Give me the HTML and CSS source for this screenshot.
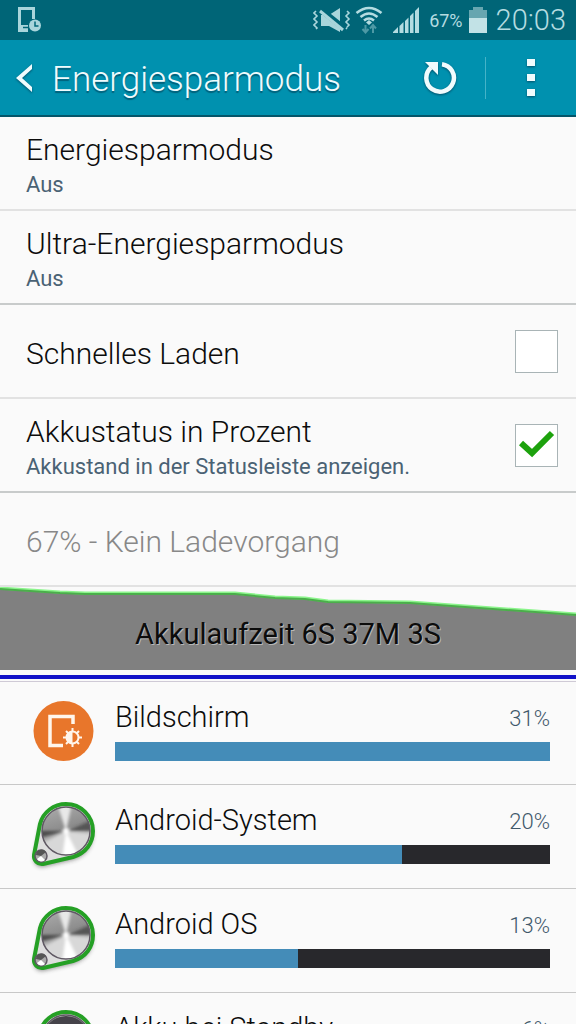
FILE: index.html
```html
<!DOCTYPE html>
<html lang="de">
<head>
<meta charset="utf-8">
<meta name="viewport" content="width=device-width, initial-scale=1">
<title>Energiesparmodus</title>
<link rel="stylesheet" href="styles.css">
</head>
<body>
<svg class="defs" width="0" height="0" aria-hidden="true">
  <defs>
    <linearGradient id="metal" x1="0.3" y1="0" x2="0.6" y2="1">
      <stop offset="0" stop-color="#a8a8a8"/>
      <stop offset="0.45" stop-color="#8c8c8c"/>
      <stop offset="0.6" stop-color="#b8b8b8"/>
      <stop offset="1" stop-color="#dadada"/>
    </linearGradient>
    <filter id="soft" x="-30%" y="-30%" width="160%" height="160%"><feGaussianBlur stdDeviation="2"/></filter>
    <filter id="blend" x="-30%" y="-30%" width="160%" height="160%"><feGaussianBlur stdDeviation="1.8"/></filter>
    <clipPath id="disc"><circle cx="36" cy="36" r="24"/></clipPath>
    <symbol id="knob" viewBox="-2 2 72 76">
      <path d="M10 29C13 17 24 9 36 9A27 27 0 0 1 63 36C63 48 56 58 43 62L13 69A8 8 0 0 1 4 60Z" transform="translate(0 3)" fill="#333" opacity="0.5" filter="url(#soft)"/>
      <path d="M10 29C13 17 24 9 36 9A27 27 0 0 1 63 36C63 48 56 58 43 62L13 69A8 8 0 0 1 4 60Z" fill="#dedede" stroke="#25a025" stroke-width="4" stroke-linejoin="round"/>
      <circle cx="36" cy="36" r="24" fill="url(#metal)"/>
      <g clip-path="url(#disc)"><g filter="url(#blend)">
        <path d="M36 36L27 8L42 8Z" fill="#e8e8e8"/>
        <path d="M36 36L64 24L64 36Z" fill="#555"/>
        <path d="M36 36L8 36L8 43Z" fill="#4c4c4c"/>
        <path d="M36 36L64 40L58 64L20 64L10 50Z" fill="#d8d8d8"/>
        <path d="M36 36L32 66L50 64Z" fill="#fff"/>
        <circle cx="36" cy="36" r="3" fill="#fff"/>
      </g></g>
      <circle cx="36" cy="36" r="24" fill="none" stroke="#5f5863" stroke-width="1.5"/>
      <circle cx="11" cy="61" r="6" fill="#aaa" stroke="#5f5863" stroke-width="1.5"/>
      <path d="M6 60L11 61L16 57A5.5 5.5 0 0 0 6 60Z" fill="#555"/>
      <path d="M7 64L11 61L15 65A5 5 0 0 1 7 64Z" fill="#fff"/>
    </symbol>
  </defs>
</svg>
<div class="screen">
  <div class="status">
    <svg class="status-note" viewBox="0 0 24 26" width="24" height="26" aria-hidden="true">
      <path d="M0 0H17V12H14V3H3V18H10V25H0Z" fill="#a9d5db"/>
      <path d="M5 20.5H10" stroke="#006577" stroke-width="1.5"/>
      <circle cx="17" cy="18.5" r="6" fill="#a9d5db"/>
      <path d="M17 14.5V19H20.5" fill="none" stroke="#006577" stroke-width="1.5"/>
    </svg>
    <div class="status-info">
      <svg viewBox="0 0 38 24" width="38" height="24" aria-hidden="true">
        <path d="M3 3L1 5L4 8L1 11L4 14L1 17L4 20L3 21M34 3L36 5L33 8L36 11L33 14L36 17L33 20L34 21" fill="none" stroke="#a9d5db" stroke-width="1.6"/>
        <path d="M8 7H16L27 0V24L16 18H8Z" fill="#a9d5db"/>
        <path d="M7 1L32 21" stroke="#006577" stroke-width="6"/>
        <path d="M7 3L30 22" stroke="#a9d5db" stroke-width="3"/>
      </svg>
      <svg class="wifi" viewBox="0 0 28 28" width="28" height="28" aria-hidden="true">
        <path d="M1.500 7Q14 -3 26.500 7M5.500 11Q14 4 22.500 11M9 14.500Q14 10.500 19 14.500" fill="none" stroke="#b4dce1" stroke-width="2.600"/>
        <path d="M14 14L17 16.500L14 19L11 16.500Z" fill="#b4dce1"/>
        <path d="M10.500 19V25M7.500 23L10.500 26.500L13.500 23M18 27V20M15 22.500L18 19L21 22.500" fill="none" stroke="#4d99a5" stroke-width="2"/>
      </svg>
      <svg class="signal" viewBox="0 0 26 26" width="26" height="26" aria-hidden="true">
        <path d="M0 26V25L5 20V26ZM6.500 26V19L10.500 15V26ZM12 26V14L15.500 10.500V26ZM17 26V9L20.500 5.500V26ZM22 26V4L26 0V26Z" fill="#b4dce1"/>
      </svg>
      <span class="percent">67%</span>
      <svg class="battery" viewBox="0 0 18 26" width="18" height="26" aria-hidden="true">
        <path d="M0 3H4V0H14V3H18V11H0Z" fill="#67a6b0"/><path d="M0 11H18V26H0Z" fill="#c2e2e6"/>
      </svg>
      <time class="clock">20:03</time>
    </div>
  </div>

  <header class="bar">
    <button class="back" aria-label="Zurück">
      <svg viewBox="0 0 18 30" width="18" height="30" aria-hidden="true"><path d="M16 1V6L6 15L16 24V29L0 15Z" fill="#f0fbfd"/></svg>
    </button>
    <h1 class="title">Energiesparmodus</h1>
    <button class="reload" aria-label="Aktualisieren">
      <svg viewBox="0 0 34 34" width="34" height="34" aria-hidden="true"><path d="M19 3.200A13.800 13.800 0 1 1 8 6.500" fill="none" stroke="#f0fbfd" stroke-width="4.500"/><path d="M2 1H15V14Z" fill="#f0fbfd"/></svg>
    </button>
    <button class="more" aria-label="Weitere Optionen">
      <svg viewBox="0 0 8 38" width="8" height="38" aria-hidden="true"><path d="M0 0H8V7H0ZM0 15H8V22H0ZM0 30H8V37H0Z" fill="#f0fbfd"/></svg>
    </button>
  </header>

  <main class="content">
    <a class="row" href="#energie"><span class="text"><span class="name">Energiesparmodus</span><span class="hint">Aus</span></span></a>
    <a class="row strong" href="#ultra"><span class="text"><span class="name">Ultra-Energiesparmodus</span><span class="hint">Aus</span></span></a>
    <div class="row">
      <label class="text" for="fast"><span class="name">Schnelles Laden</span></label>
      <input class="tick" type="checkbox" id="fast">
    </div>
    <div class="row strong">
      <label class="text" for="show"><span class="name">Akkustatus in Prozent</span><span class="hint">Akkustand in der Statusleiste anzeigen.</span></label>
      <input class="tick" type="checkbox" id="show" checked>
    </div>
    <div class="row muted"><span class="text"><span class="name">67% - Kein Ladevorgang</span></span></div>

    <section class="graph">
      <svg class="curve" viewBox="0 0 576 94" preserveAspectRatio="none" aria-hidden="true">
        <path d="M0 1L60 5L85 6H235L275 10L305 11L328 14L410 15L576 27V83H0Z" fill="#808080"/>
        <path d="M0 1L60 5L85 6H235L275 10L305 11L328 14L410 15L576 27" fill="none" stroke="#8cf58c" stroke-width="3"/>
        <path d="M0 2L60 6L85 7H235L275 11L305 12L328 15L410 16L576 28" fill="none" stroke="#4bae4b" stroke-width="2"/>
        <path d="M0 90H576" stroke="#1212c8" stroke-width="4"/>
      </svg>
      <p class="runtime">Akkulaufzeit 6S 37M 3S</p>
    </section>

    <ul class="usage">
      <li class="item">
        <svg class="icon" viewBox="0 0 72 76" width="72" height="76" aria-hidden="true">
          <circle cx="35.500" cy="38" r="30" fill="#e8762b"/>
          <path d="M45 31V23.500H22V52.500H35" fill="none" stroke="#fff6ec" stroke-width="3.500"/>
          <path d="M44.500 35V54M35 44.500H54M38 38L51 51M51 38L38 51" stroke="#fff6ec" stroke-width="2"/>
          <circle cx="44.500" cy="44.500" r="6" fill="#e8762b" stroke="#fff6ec" stroke-width="2"/>
          <path d="M44.500 38.500A6 6 0 0 0 44.500 50.500Z" fill="#fff6ec"/>
        </svg>
        <div class="detail"><span class="name">Bildschirm</span><span class="share">31%</span><div class="track"><div class="fill" style="width:100%"></div></div></div>
      </li>
      <li class="item">
        <svg class="icon" width="72" height="76" aria-hidden="true"><use href="#knob"/></svg>
        <div class="detail"><span class="name">Android-System</span><span class="share">20%</span><div class="track"><div class="fill" style="width:66%"></div></div></div>
      </li>
      <li class="item">
        <svg class="icon" width="72" height="76" aria-hidden="true"><use href="#knob"/></svg>
        <div class="detail"><span class="name">Android OS</span><span class="share">13%</span><div class="track"><div class="fill" style="width:42%"></div></div></div>
      </li>
      <li class="item">
        <svg class="icon" viewBox="0 0 72 76" width="72" height="76" aria-hidden="true"><use href="#knob"/><circle cx="38" cy="34" r="23" fill="#45434a"/></svg>
        <div class="detail"><span class="name">Akku bei Standby</span><span class="share">6%</span><div class="track"><div class="fill" style="width:19%"></div></div></div>
      </li>
    </ul>
  </main>
</div>
</body>
</html>
```
FILE: styles.css
```css
* { box-sizing: border-box; }

body {
  margin: 0;
  background: #fafafa;
  color: #0c0c0c;
  font-family: Roboto, "Liberation Sans", sans-serif;
  font-weight: 300;
}

.defs { position: absolute; }

.screen {
  display: flex;
  flex-direction: column;
  height: 100vh;
  overflow: hidden;
}

.status {
  display: flex;
  flex: none;
  align-items: center;
  justify-content: space-between;
  height: 40px;
  padding: 0 10px 0 18px;
  background: #006577;
  color: #b4dce1;
}

.status-info { display: flex; align-items: center; }
.wifi { margin-left: 4px; }
.signal { margin-left: 10px; }
.percent { margin-left: 10px; font-size: 18px; font-weight: 400; }
.battery { margin-left: 6px; }
.clock { margin-left: 9px; font-size: 29px; }

.bar {
  display: flex;
  flex: none;
  align-items: center;
  height: 77px;
  border-bottom: 2px solid #04566a;
  background: #0091af;
  color: #f0fbfd;
}

.bar svg { display: block; filter: drop-shadow(0 1px 1px #00506a); }

.back, .reload, .more {
  padding: 0;
  border: 0;
  background: none;
}

.back { padding: 0 18px 0 16px; }

.title {
  flex: 1;
  margin: 0;
  padding-top: 4px;
  font-size: 35px;
  font-weight: 300;
  text-shadow: 0 2px 1px #00607a;
}

.reload { padding: 4px 28px; border-right: 1px solid #45b3c8; }
.more { padding: 0 41px; }

.content { flex: 1; min-height: 0; overflow: hidden; }

.row {
  display: flex;
  align-items: center;
  height: 94px;
  padding: 0 18px 0 26px;
  border-bottom: 2px solid #e2e2e2;
  color: inherit;
  text-decoration: none;
}

.strong { border-bottom-color: #c8cbcb; }
.text { flex: 1; padding-top: 5px; }
.name { display: block; font-size: 30px; line-height: 38px; }
.hint { display: block; color: #4a6274; font-size: 22px; font-weight: 400; line-height: 32px; }
.muted { color: #888; }

.tick {
  appearance: none;
  width: 43px;
  height: 43px;
  margin: 0;
  border: 1px solid #a9b4b6;
  background: #fff;
}

.tick:checked {
  background: #fff url("data:image/svg+xml,%3Csvg xmlns='http://www.w3.org/2000/svg' viewBox='0 0 41 41'%3E%3Cpath d='M5 18L16 28L36 8' fill='none' stroke='%231da20d' stroke-width='6'/%3E%3C/svg%3E") center / 41px 41px no-repeat;
}

.graph {
  display: grid;
  border-bottom: 1px solid #cfcad6;
}

.curve, .runtime { grid-area: 1 / 1; }
.curve { display: block; width: 100%; height: 94px; }

.runtime {
  margin: 0;
  align-self: center;
  font-size: 29px;
  font-weight: 400;
  text-align: center;
  text-shadow: 1px 1px 0 #b8b8b8;
}

.usage { margin: 0; padding: 0; list-style: none; }

.item {
  display: flex;
  align-items: center;
  gap: 15px;
  height: 104px;
  padding: 0 26px 4px 28px;
  border-bottom: 1px solid #c8c8c8;
}

.item:first-child { height: 103px; }

.icon { flex: none; }

.detail {
  display: grid;
  flex: 1;
  grid-template-columns: 1fr auto;
  align-items: center;
  row-gap: 6px;
  padding-bottom: 4px;
}

.detail .name { font-size: 29px; }
.share { padding-top: 3px; color: #40586a; font-size: 22px; }

.track {
  grid-column: 1 / -1;
  height: 19px;
  background: #28282c;
}

.fill { height: 100%; background: #448cb8; }
```
